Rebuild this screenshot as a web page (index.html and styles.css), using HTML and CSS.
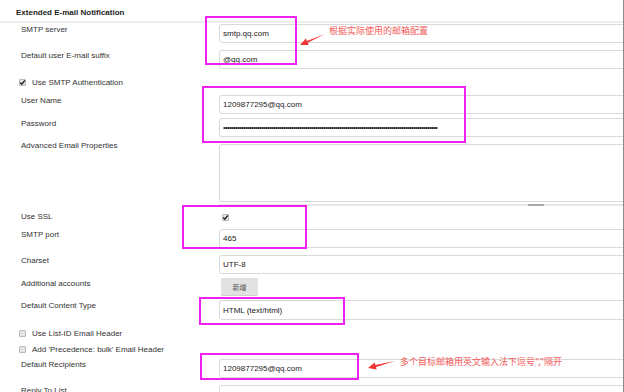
FILE: index.html
```html
<!DOCTYPE html>
<html>

<head>
    <title>Extended E-mail Notification</title>
    <link rel="stylesheet" href="styles.css">
</head>

<body>
    <div class="page">
        <div class="section-title">Extended E-mail Notification</div>

        <div class="row first">
            <label>SMTP server</label>
            <input class="field" type="text" value="smtp.qq.com">
        </div>
        <div class="row">
            <label>Default user E-mail suffix</label>
            <input class="field" type="text" value="@qq.com">
        </div>
        <div class="check-row">
            <span class="cb checked"><svg viewBox="0 0 7 7"><path d="M1.2 3.6 L2.8 5.2 L5.9 1.4" /></svg></span>
            Use SMTP Authentication
        </div>
        <div class="row gap-s">
            <label>User Name</label>
            <input class="field" type="text" value="1209877295@qq.com">
        </div>
        <div class="row">
            <label>Password</label>
            <input class="field password" type="password" value="aaaaaaaaaaaaaaaaaaaaaaaaaaaaaaaaaaaaaaaaaaaaaaaaaaaaaaaaaaaaaaaaaaaaaaaaaaaaaaaaaaaaaaaaaaaaaaaaaaaaaaaaaaa">
        </div>
        <div class="row no-gap">
            <label class="label-up">Advanced Email Properties</label>
            <div>
                <textarea class="field area"></textarea>
                <div class="handle"><span></span></div>
            </div>
        </div>
        <div class="row check-field">
            <label>Use SSL</label>
            <span class="cb checked"><svg viewBox="0 0 7 7"><path d="M1.2 3.6 L2.8 5.2 L5.9 1.4" /></svg></span>
        </div>
        <div class="row">
            <label>SMTP port</label>
            <input class="field" type="text" value="465">
        </div>
        <div class="row gap-s">
            <label>Charset</label>
            <input class="field" type="text" value="UTF-8">
        </div>
        <div class="row gap-s">
            <label>Additional accounts</label>
            <div><button class="btn">新增</button></div>
        </div>
        <div class="row">
            <label>Default Content Type</label>
            <select class="field select">
                <option>HTML (text/html)</option>
            </select>
        </div>
        <div class="check-row gap-s">
            <span class="cb"></span>
            Use List-ID Email Header
        </div>
        <div class="check-row gap-s">
            <span class="cb"></span>
            Add 'Precedence: bulk' Email Header
        </div>
        <div class="row">
            <label>Default Recipients</label>
            <input class="field" type="text" value="1209877295@qq.com">
        </div>
        <div class="row">
            <label>Reply To List</label>
            <input class="field" type="text" value="">
        </div>

        <!-- 标注 -->
        <div class="mark mark-1"></div>
        <div class="mark mark-2"></div>
        <div class="mark mark-3"></div>
        <div class="mark mark-4"></div>
        <div class="mark mark-5"></div>

        <svg class="arrows" viewBox="0 0 624 392">
            <polygon points="325,34 306.9,40.9 305.9,38.6 300,45 308.7,45 307.7,42.7" />
            <polygon points="395,361 375.4,365 374.8,362.6 368,368 376.6,369.4 376,367" />
        </svg>
        <div class="note note-1">根据实际使用的邮箱配置</div>
        <div class="note note-2">多个目标邮箱用英文输入法下逗号","隔开</div>
    </div>
</body>

</html>
```

FILE: styles.css
```css
body {
    margin: 0;
    background: white;
    font-family: "Liberation Sans", Arial, sans-serif;
    font-size: 8px;
    color: #333;
}

.page {
    position: relative;
    width: 624px;
    height: 392px;
    box-sizing: border-box;
    border-right: 1px solid #8a8a8a;
    overflow: hidden;
}

.section-title {
    height: 13px;
    padding: 8px 0 0 17px;
    line-height: 10px;
    font-weight: bold;
    color: #222;
    border-bottom: 2px solid #eee;
    margin-left: -1px;
}

.row {
    display: grid;
    grid-template-columns: 198px 634px;
    align-items: start;
    padding-left: 21px;
    margin-bottom: 7px;
}

.row.first {
    margin-top: 1px;
}

.row.gap-s,
.check-row.gap-s {
    margin-bottom: 4px;
}

.row.no-gap {
    margin-bottom: 0;
}

.row label {
    padding-top: 1px;
    line-height: 10px;
}

.row label.label-up {
    margin-top: -4px;
}

.field {
    display: block;
    box-sizing: border-box;
    width: 634px;
    height: 19px;
    margin: 0;
    padding: 0 3px;
    border: 1px solid #d9d9d9;
    border-radius: 3px;
    background: white;
    font-family: "Liberation Sans", Arial, sans-serif;
    font-size: 8px;
    color: #222;
    outline: none;
}

.field.password {
    letter-spacing: -0.8px;
}

.field.select {
    height: 20px;
    appearance: none;
    -webkit-appearance: none;
}

.field.area {
    height: 58px;
    resize: none;
}

.handle {
    display: flex;
    justify-content: center;
    width: 634px;
    height: 2px;
    margin: 2px 0 5px;
    background: #e6e6e6;
}

.handle span {
    width: 16px;
    background: #a8a8a8;
}

.check-row {
    display: flex;
    align-items: center;
    gap: 6px;
    height: 12px;
    padding-left: 19px;
    margin-bottom: 7px;
}

.cb {
    display: inline-block;
    box-sizing: border-box;
    width: 7px;
    height: 7px;
    border: 1px solid #b8b8b8;
    border-radius: 1px;
    background: #e4e4e4;
}

.cb svg {
    display: block;
    width: 7px;
    height: 7px;
    margin: -1px 0 0 -1px;
}

.cb svg path {
    fill: none;
    stroke: #222;
    stroke-width: 1.4;
}

.check-field .cb {
    margin: 3px 0 0 3px;
}

.btn {
    display: block;
    width: 37px;
    height: 18px;
    margin-left: 2px;
    padding: 0;
    border: none;
    border-bottom: 1px solid #d0d0d0;
    border-radius: 1px;
    background: #e2e2e2;
    font-family: "Noto Sans CJK SC", sans-serif;
    font-size: 7px;
    color: #555;
}

.mark {
    position: absolute;
    box-sizing: border-box;
    border: 2px solid #f020f0;
}

.mark-1 { left: 205px; top: 16px; width: 92px; height: 49px; }
.mark-2 { left: 202px; top: 86px; width: 264px; height: 57px; }
.mark-3 { left: 182px; top: 205px; width: 125px; height: 44px; }
.mark-4 { left: 199px; top: 297px; width: 146px; height: 28px; }
.mark-5 { left: 200px; top: 353px; width: 159px; height: 27px; }

.arrows {
    position: absolute;
    left: 0;
    top: 0;
    width: 624px;
    height: 392px;
    fill: #ee3434;
}

.note {
    position: absolute;
    font-family: "Noto Sans CJK SC", sans-serif;
    font-size: 9px;
    line-height: 10px;
    color: #f25a5a;
    white-space: nowrap;
}

.note-1 { left: 329px; top: 26px; }
.note-2 { left: 400px; top: 357px; }
```
